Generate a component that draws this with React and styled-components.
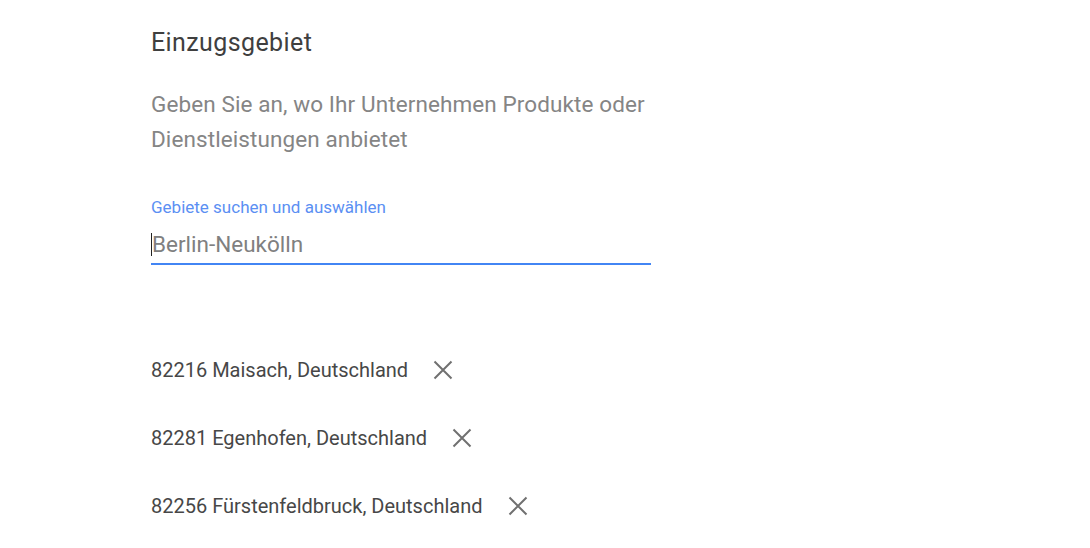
import React, {useEffect, useRef} from 'react'
import styled, {createGlobalStyle} from 'styled-components'

const Global = createGlobalStyle`
  body {
    margin: 0;
    background: #fff;
    font-family: Roboto, "Noto Sans", Arial, sans-serif;
  }
`

const Page = styled.div`
  width: 1090px;
  height: 548px;
  overflow: hidden;
  padding: 28px 0 0 151px;
  box-sizing: border-box;
`

const Title = styled.h2`
  margin: 0;
  font-size: 25px;
  font-weight: 400;
  line-height: 30px;
  letter-spacing: 0.4px;
  color: #3f3f3f;
`

const Hint = styled.p`
  margin: 29px 0 0;
  width: 540px;
  font-size: 22.5px;
  line-height: 35px;
  letter-spacing: 0.1px;
  color: #858585;
`

const Field = styled.div`
  margin-top: 40px;
  width: 500px;
  padding-bottom: 4px;
  border-bottom: 2px solid #4285f4;
`

const Label = styled.div`
  font-size: 17px;
  line-height: 20px;
  color: #5b8ff3;
`

const InputWrap = styled.div`
  position: relative;
  margin-top: 12px;
`

// blinking caret, always drawn so the screenshot shows it
const Caret = styled.span`
  position: absolute;
  left: 0;
  top: 4px;
  width: 1px;
  height: 23px;
  background: #222;
  pointer-events: none;
`

const Input = styled.input`
  display: block;
  width: 100%;
  border: 0;
  outline: none;
  padding: 0 0 0 1px;
  height: 30px;
  font: inherit;
  font-size: 22.5px;
  color: #808080;
  background: transparent;
  caret-color: transparent;
`

const List = styled.ul`
  list-style: none;
  margin: 91px 0 0;
  padding: 0;
  display: flex;
  flex-direction: column;
  gap: 40px;
`

const Item = styled.li`
  display: flex;
  align-items: center;
  gap: 24px;
  height: 28px;
  font-size: 20px;
  color: #474747;
`

const Remove = styled.button`
  border: 0;
  background: none;
  padding: 0;
  width: 22px;
  height: 22px;
  display: flex;
  align-items: center;
  justify-content: center;
  cursor: pointer;
`

const areas = [
  '82216 Maisach, Deutschland',
  '82281 Egenhofen, Deutschland',
  '82256 Fürstenfeldbruck, Deutschland',
]

export default function App() {
  const input = useRef(null)
  useEffect(() => {
    input.current.focus()
    input.current.setSelectionRange(0, 0)
  }, [])

  return (
    <Page>
      <Global />
      <Title>Einzugsgebiet</Title>
      <Hint>Geben Sie an, wo Ihr Unternehmen Produkte oder Dienstleistungen anbietet</Hint>
      <Field>
        <Label>Gebiete suchen und auswählen</Label>
        <InputWrap>
          <Input ref={input} defaultValue="Berlin-Neukölln" />
          <Caret />
        </InputWrap>
      </Field>
      <List>
        {areas.map(a => (
          <Item key={a}>
            {a}
            <Remove aria-label="Entfernen">
              <svg width="22" height="22" viewBox="0 0 22 22">
                <path d="M2.5 2.5 L19.5 19.5 M19.5 2.5 L2.5 19.5" stroke="#707070" strokeWidth="2" />
              </svg>
            </Remove>
          </Item>
        ))}
      </List>
    </Page>
  )
}
